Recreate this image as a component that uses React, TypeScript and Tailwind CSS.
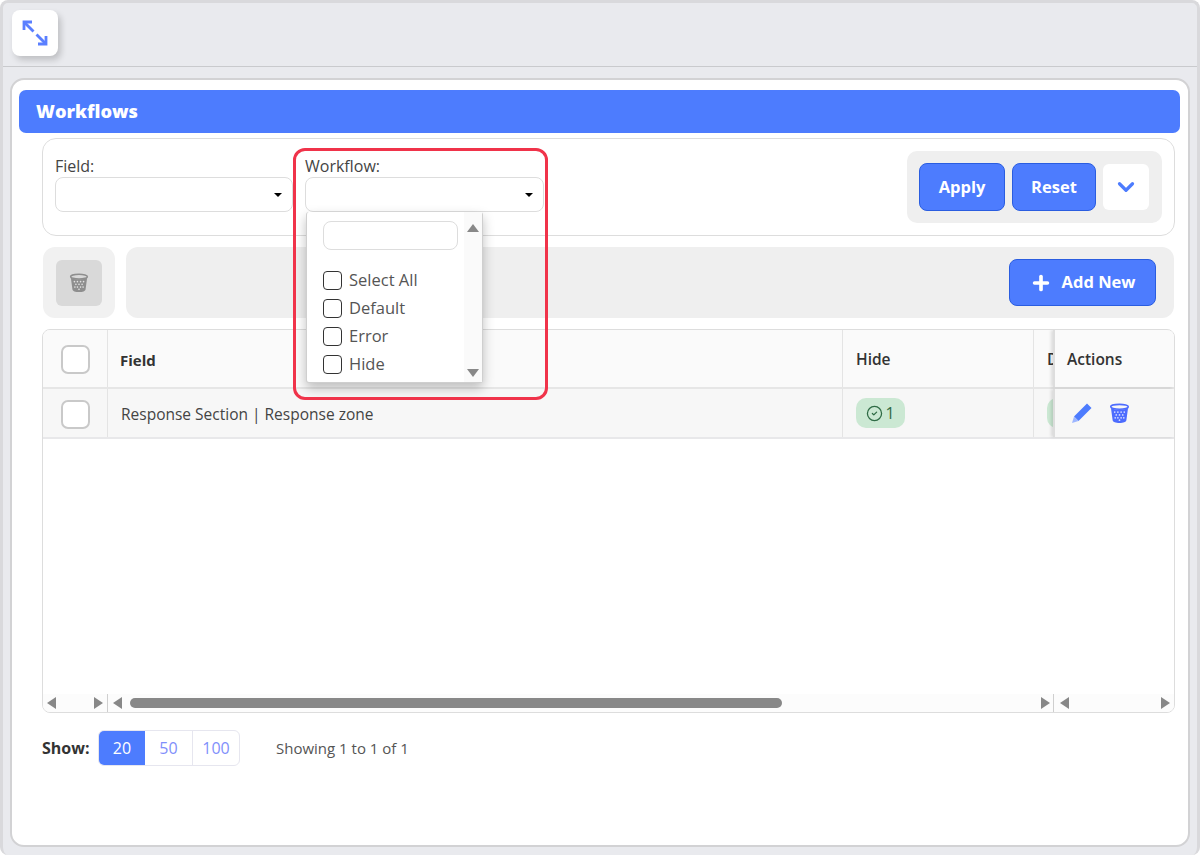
import { ChevronDown, CircleCheck, Plus } from "lucide-react";

function ExpandIcon() {
  return (
    <svg width="28" height="28" viewBox="0 0 28 28" fill="none" stroke="#5a7fff" strokeWidth="2.8">
      <path d="M3 11V3h8" />
      <path d="M3.500 3.500l9 9" />
      <path d="M25 17v8h-8" />
      <path d="M24.500 24.500l-9-9" />
    </svg>
  );
}

function PencilIcon() {
  return (
    <svg width="22" height="22" viewBox="0 0 22 22">
      <path d="M16 1.500l4.500 4.500L7.500 19 3 14.500z" fill="#4d7cfe" />
      <path d="M3 14.500L7.500 19 1 21z" fill="#9db6ff" />
    </svg>
  );
}

function TrashIcon({ color, size = 22 }: { color: string; size?: number }) {
  return (
    <svg width={size} height={size} viewBox="0 0 22 22">
      <ellipse cx="11" cy="4" rx="9.200" ry="2.600" fill="none" stroke={color} strokeWidth="1.700" />
      <path d="M2 5l1.800 13.200C4 20 7 21 11 21s7-1 7.200-2.800L20 5c-2 1.600-5 2-9 2S4 6.600 2 5z" fill={color} />
      <g fill="#ffffff" opacity="0.75">
        <circle cx="6" cy="9.500" r="0.900" />
        <circle cx="9.300" cy="9.500" r="0.900" />
        <circle cx="12.700" cy="9.500" r="0.900" />
        <circle cx="16" cy="9.500" r="0.900" />
        <circle cx="7.600" cy="12.500" r="0.900" />
        <circle cx="11" cy="12.500" r="0.900" />
        <circle cx="14.400" cy="12.500" r="0.900" />
        <circle cx="6.500" cy="15.500" r="0.900" />
        <circle cx="9.300" cy="15.500" r="0.900" />
        <circle cx="12.700" cy="15.500" r="0.900" />
        <circle cx="15.500" cy="15.500" r="0.900" />
        <circle cx="11" cy="18" r="0.900" />
      </g>
    </svg>
  );
}

function Caret() {
  return <span className="h-0 w-0 border-x-[4px] border-t-[4px] border-x-transparent border-t-black" />;
}

function ArrowLeft() {
  return <span className="block h-0 w-0 border-y-[6px] border-r-[9px] border-y-transparent border-r-[#888888]" />;
}

function ArrowRight() {
  return <span className="block h-0 w-0 border-y-[6px] border-l-[9px] border-y-transparent border-l-[#888888]" />;
}

function SelectField({ label, width }: { label: string; width: string }) {
  return (
    <div className={width}>
      <div className="h-[20px] text-[16px] leading-[18px] text-[#444444]">{label}</div>
      <div className="flex h-[35px] items-center justify-end rounded-[8px] border border-[#dddddd] bg-white pr-[10px]">
        <Caret />
      </div>
    </div>
  );
}

function RowCheck() {
  return <span className="block h-[29px] w-[29px] rounded-[7px] border-2 border-[#c9c9c9] bg-white" />;
}

function DropItem({ label }: { label: string }) {
  return (
    <div className="flex h-[28px] items-center gap-[7px] text-[16.500px] text-[#555555]">
      <span className="h-[19px] w-[19px] rounded-[4px] border border-[#333333] bg-white" />
      {label}
    </div>
  );
}

function WorkflowDropdown() {
  return (
    <div className="absolute left-[306px] top-[212px] z-20 flex h-[171px] w-[177px] rounded-[3px] border-x border-b border-[#cfcfcf] bg-white shadow-[0_5px_12px_rgba(0,0,0,0.25)]">
      <div className="w-[157px] pl-[16px] pt-[9px]">
        <div className="h-[29px] w-[135px] rounded-[8px] border border-[#dddddd]" />
        <div className="mt-[16px]">
          <DropItem label="Select All" />
          <DropItem label="Default" />
          <DropItem label="Error" />
          <DropItem label="Hide" />
        </div>
      </div>
      <div className="flex w-[18px] flex-col items-center justify-between bg-[#fafafa] pb-[5px] pt-[12px]">
        <span className="h-0 w-0 border-x-[6px] border-b-[8px] border-x-transparent border-b-[#888888]" />
        <span className="h-0 w-0 border-x-[6px] border-t-[8px] border-x-transparent border-t-[#888888]" />
      </div>
    </div>
  );
}

export default function App() {
  return (
    <div className="relative h-[855px] w-[1200px] overflow-hidden rounded-[8px] border-[3px] border-b-0 border-[#d9d9dc] bg-[#e9eaee] font-['Open_Sans','Noto_Sans',sans-serif]">
      {/* top bar */}
      <div className="h-[64px] border-b border-[#c9cacd] pl-[9px] pt-[7px]">
        <button className="flex h-[46px] w-[46px] items-center justify-center rounded-[8px] bg-white shadow-[3px_4px_6px_rgba(0,0,0,0.18)]">
          <ExpandIcon />
        </button>
      </div>

      {/* main panel */}
      <div className="ml-[7px] mt-[11px] h-[769px] w-[1180px] rounded-[14px] border-2 border-[#d2d2d4] bg-white pl-[7px] pt-[10px]">
        <div className="flex h-[43px] w-[1161px] items-center rounded-[7px] bg-[#4d7cfe] pl-[17px] text-[18.200px] font-extrabold text-white">
          Workflows
        </div>

        {/* filters */}
        <div className="ml-[23px] mt-[5px] flex h-[98px] w-[1133px] items-start justify-between rounded-[14px] border border-[#dddddd] pl-[12px] pr-[12px] pt-[12px]">
          <div className="flex gap-[12px] pt-[6px]">
            <SelectField label="Field:" width="w-[238px]" />
            <SelectField label="Workflow:" width="w-[239px]" />
          </div>
          <div className="flex h-[72px] w-[255px] items-center gap-[7px] rounded-[10px] bg-[#efefef] pl-[12px]">
            <button className="h-[48px] w-[86px] rounded-[8px] border border-[#2a5de0] bg-[#4d7cfe] text-[16.500px] font-bold text-white">
              Apply
            </button>
            <button className="h-[48px] w-[84px] rounded-[8px] border border-[#2a5de0] bg-[#4d7cfe] text-[16.500px] font-bold text-white">
              Reset
            </button>
            <button className="flex h-[46px] w-[46px] items-center justify-center rounded-[6px] bg-white">
              <ChevronDown className="h-[26px] w-[26px] text-[#4d7cfe]" strokeWidth={3} />
            </button>
          </div>
        </div>

        {/* toolbar */}
        <div className="ml-[24px] mt-[11px] flex h-[71px] gap-[11px]">
          <div className="flex w-[72px] items-center justify-center rounded-[12px] bg-[#f1f1f1]">
            <div className="flex h-[46px] w-[46px] items-center justify-center rounded-[6px] bg-[#d9d9d9]">
              <TrashIcon color="#8e8e8e" size={20} />
            </div>
          </div>
          <div className="flex w-[1048px] items-center justify-end rounded-[12px] bg-[#efefef] pr-[18px]">
            <button className="flex h-[47px] w-[147px] items-center justify-center gap-[10px] rounded-[8px] border border-[#2a5de0] bg-[#4d7cfe] text-[16.500px] font-bold text-white">
              <Plus className="h-[22px] w-[22px]" strokeWidth={4} />
              Add New
            </button>
          </div>
        </div>

        {/* table */}
        <div className="ml-[23px] mt-[11px] flex h-[384px] w-[1133px] flex-col overflow-hidden rounded-[8px] border border-[#dddddd]">
          <div className="flex h-[59px] border-b-2 border-[#e6e6e6] bg-[#fafafa] text-[15.500px]">
            <div className="flex w-[65px] items-center justify-center border-r border-[#e4e4e4] pt-[1px]">
              <RowCheck />
            </div>
            <div className="flex w-[735px] items-center border-r border-[#e4e4e4] pl-[12px] pt-[3px] text-[15px] font-bold text-[#333333]">
              Field
            </div>
            <div className="flex w-[191px] items-center border-r border-[#e4e4e4] pl-[13px] pt-[3px] font-semibold text-[#333333]">
              Hide
            </div>
            <div className="flex w-[20px] items-center overflow-hidden pl-[13px] pt-[3px] font-semibold text-[#333333]">
              D
            </div>
            <div className="-ml-[1px] flex flex-1 items-center border-l-2 border-[#dddddd] bg-[#fafafa] pl-[12px] pt-[3px] font-semibold text-[#333333] shadow-[-2px_0_3px_rgba(0,0,0,0.12)]">
              Actions
            </div>
          </div>
          <div className="flex h-[50px] border-b-2 border-[#e8e8ea] bg-[#f7f7f7] text-[15.500px]">
            <div className="flex w-[65px] items-center justify-center border-r border-[#e4e4e4] pt-[2px]">
              <RowCheck />
            </div>
            <div className="flex w-[735px] items-center border-r border-[#e4e4e4] pl-[13px] pt-[3px] text-[#444444]">
              Response Section | Response zone
            </div>
            <div className="flex w-[191px] items-center border-r border-[#e4e4e4] pl-[13px]">
              <span className="flex h-[30px] w-[49px] items-center justify-center gap-[2px] rounded-[10px] bg-[#cbe8d3] text-[16px] text-[#2f6b45]">
                <CircleCheck className="h-[17px] w-[17px]" strokeWidth={1.8} />1
              </span>
            </div>
            <div className="flex w-[20px] items-center overflow-hidden pl-[13px]">
              <span className="h-[30px] w-[20px] shrink-0 rounded-l-[10px] bg-[#cbe8d3]" />
            </div>
            <div className="-ml-[1px] flex flex-1 items-center gap-[16px] border-l-2 border-[#dddddd] bg-[#f7f7f7] pl-[16px] shadow-[-2px_0_3px_rgba(0,0,0,0.12)]">
              <PencilIcon />
              <TrashIcon color="#4d6cfe" size={21} />
            </div>
          </div>
          <div className="flex-1" />
          <div className="flex h-[18px] items-center bg-[#fcfcfc]">
            <div className="flex h-full w-[65px] items-center justify-between border-r border-[#cfcfcf] px-[4px]">
              <ArrowLeft />
              <ArrowRight />
            </div>
            <div className="flex h-full w-[946px] items-center border-r border-[#cfcfcf] pl-[5px] pr-[3px]">
              <ArrowLeft />
              <span className="ml-[8px] h-[10px] w-[652px] rounded-full bg-[#888888]" />
              <span className="ml-auto">
                <ArrowRight />
              </span>
            </div>
            <div className="flex h-full flex-1 items-center justify-between pl-[6px] pr-[4px]">
              <ArrowLeft />
              <ArrowRight />
            </div>
          </div>
        </div>

        {/* footer */}
        <div className="ml-[23px] mt-[17px] flex items-center text-[15px]">
          <span className="w-[56px] text-[16px] font-bold text-[#333333]">Show:</span>
          <div className="flex h-[36px] w-[142px] overflow-hidden rounded-[6px] border border-[#e6e6ef] text-[16px]">
            <span className="flex w-[46px] items-center justify-center bg-[#4d7cfe] text-white">20</span>
            <span className="flex w-[48px] items-center justify-center border-r border-[#e6e6ef] text-[#7f8ffb]">50</span>
            <span className="flex flex-1 items-center justify-center text-[#7f8ffb]">100</span>
          </div>
          <span className="ml-[36px] text-[15px] text-[#555555]">Showing 1 to 1 of 1</span>
        </div>
      </div>

      {/* dropdown and highlight are placed in page coordinates, frame border is 3px */}
      <div className="absolute -left-[3px] -top-[3px] h-[855px] w-[1200px]">
        <WorkflowDropdown />
        <div className="absolute left-[293px] top-[148px] z-30 h-[252px] w-[255px] rounded-[12px] border-[3px] border-[#f0334a]" />
      </div>
    </div>
  );
}
